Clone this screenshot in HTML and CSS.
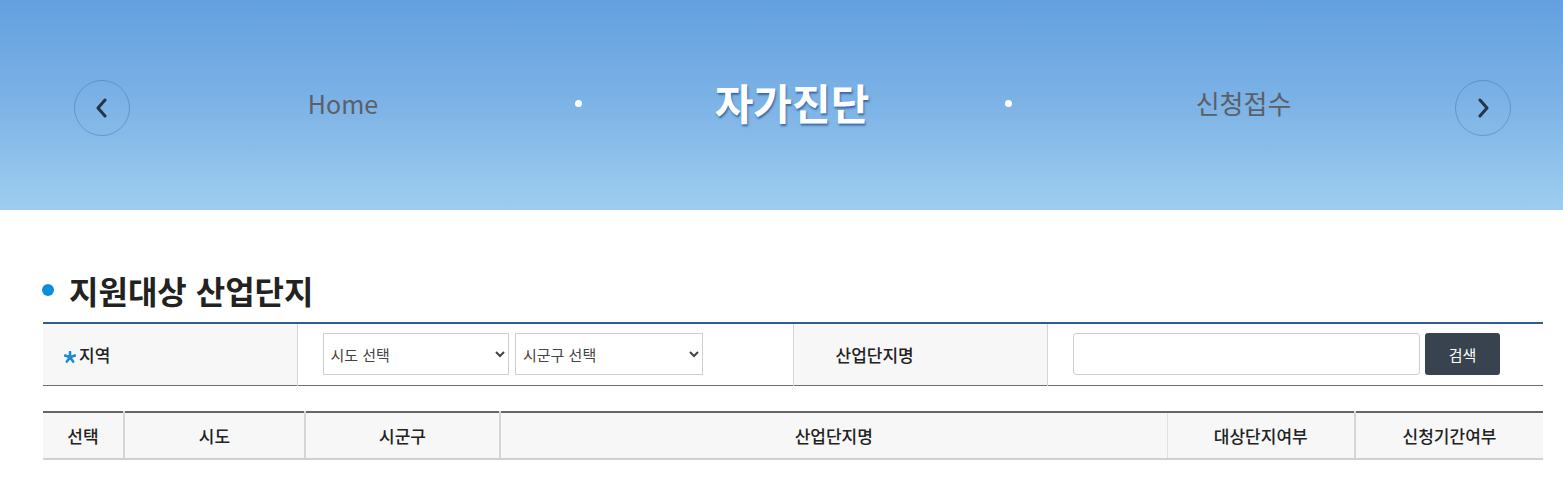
FILE: index.html
```html
<!DOCTYPE html>
<html lang="ko">
<head>
  <meta charset="UTF-8" />
  <title>지원대상 산업단지</title>
  <link rel="stylesheet" href="styles.css">
</head>
<body>
  <div class="visual">
    <div class="visual-nav">
      <a class="arrow-btn" href="#" title="이전">
        <svg width="14" height="20" viewBox="0 0 14 20"><path d="M10 2 L3 10 L10 18" fill="none" stroke="#263447" stroke-width="3" stroke-linecap="round" stroke-linejoin="round"/></svg>
      </a>
      <div class="slot slot-1">Home</div>
      <span class="dot dot-1"></span>
      <div class="slot slot-2 current">자가진단</div>
      <span class="dot dot-2"></span>
      <div class="slot slot-3">신청접수</div>
      <a class="arrow-btn" href="#" title="다음">
        <svg width="14" height="20" viewBox="0 0 14 20"><path d="M4 2 L11 10 L4 18" fill="none" stroke="#263447" stroke-width="3" stroke-linecap="round" stroke-linejoin="round"/></svg>
      </a>
    </div>
  </div>

  <div class="content">
    <h2 class="tit"><span class="bullet"></span>지원대상 산업단지</h2>

    <table class="search-tbl">
      <tr>
        <th class="th-area">
          <svg class="req" width="12" height="12" viewBox="0 0 12 12"><path d="M6 1 L6 6.3 M6 6.3 L11 4.6 M6 6.3 L9.1 10.6 M6 6.3 L2.9 10.6 M6 6.3 L1 4.6" stroke="#1e8ad6" stroke-width="2.6" stroke-linecap="round"/></svg>지역
        </th>
        <td class="td-select">
          <select class="sel sel-sido"><option>시도 선택</option></select>
          <select class="sel sel-sgg"><option>시군구 선택</option></select>
        </td>
        <th class="th-name">산업단지명</th>
        <td class="td-input">
          <input type="text" class="inp" />
          <button type="button" class="btn-search">검색</button>
        </td>
      </tr>
    </table>

    <table class="list-tbl">
      <thead>
        <tr>
          <th class="c1">선택</th>
          <th class="c2">시도</th>
          <th class="c3">시군구</th>
          <th class="c4">산업단지명</th>
          <th class="c5">대상단지여부</th>
          <th class="c6">신청기간여부</th>
        </tr>
      </thead>
    </table>
  </div>
</body>
</html>
```

FILE: styles.css
```css
body {
  margin: 0;
  padding: 0;
  background: #fff;
  color: #222;
  font-family: "Noto Sans CJK KR", "Noto Sans", sans-serif;
}

.visual {
  height: 210px;
  background: linear-gradient(to bottom, #63a0e0 0%, #7db3e6 50%, #9ecdef 100%);
}

.visual-nav {
  display: flex;
  align-items: center;
  height: 210px;
  padding-left: 74px;
  box-sizing: border-box;
}

.arrow-btn {
  display: flex;
  align-items: center;
  justify-content: center;
  width: 56px;
  height: 56px;
  margin-top: 6px;
  border: 1px solid rgba(60, 110, 170, 0.45);
  border-radius: 50%;
  box-sizing: border-box;
}

.slot {
  text-align: center;
  font-size: 25px;
  color: #5b6068;
  line-height: 40px;
  margin-top: -4px;
}

.slot-1 { width: 426px; }
.slot-2 { width: 420px; }
.slot-3 { width: 423px; padding-left: 20px; font-size: 26px; }

.slot.current {
  font-size: 42px;
  font-weight: 700;
  color: #fff;
  text-shadow: 1px 2px 2px rgba(25, 75, 140, 0.7);
  margin-top: -6px;
}

.dot {
  display: block;
  width: 7px;
  height: 7px;
  background: #fff;
  border-radius: 50%;
  margin-top: -4px;
}

.dot-1 { margin-left: 19px; }
.dot-2 { margin-left: 3px; }

.content {
  width: 1500px;
  margin: 0 20px 0 43px;
}

.tit {
  display: flex;
  align-items: center;
  gap: 15px;
  margin: 60px 0 12px;
  font-size: 32px;
  line-height: 40px;
  font-weight: 700;
  color: #222;
}

.bullet {
  width: 12px;
  height: 12px;
  margin-left: -1px;
  border-radius: 50%;
  background: #0b8fdb;
}

table {
  width: 100%;
  border-collapse: collapse;
  table-layout: fixed;
}

.search-tbl {
  border-top: 2px solid #2f5d8e;
  border-bottom: 1px solid #6e6e6e;
}

.search-tbl th,
.search-tbl td {
  height: 62px;
  padding: 0;
  vertical-align: middle;
  box-sizing: border-box;
}

.search-tbl th {
  background: #f7f7f7;
  text-align: left;
  font-size: 17px;
  font-weight: 500;
  color: #222;
  width: 254px;
}

.th-area {
  padding-left: 21px !important;
  border-right: 1px solid #d5d5d5;
}

.th-name {
  padding-left: 42px !important;
  border-left: 1px solid #d5d5d5;
  border-right: 1px solid #d5d5d5;
}

.req {
  vertical-align: -1px;
  margin-right: 3px;
}

.td-select {
  padding-left: 25px !important;
}

.sel {
  height: 42px;
  border: 1px solid #cfcfcf;
  background: #fff;
  font-family: "Noto Sans CJK KR", sans-serif;
  font-size: 15px;
  color: #444;
  padding: 0 3px;
  border-radius: 0;
  vertical-align: middle;
}

.sel-sido { width: 186px; }
.sel-sgg { width: 188px; margin-left: 2px; }

.td-input {
  padding-left: 25px !important;
}

.inp {
  width: 347px;
  height: 42px;
  border: 1px solid #cfcfcf;
  border-radius: 3px;
  box-sizing: border-box;
  vertical-align: middle;
}

.btn-search {
  width: 75px;
  height: 42px;
  margin-left: 1px;
  border: 0;
  border-radius: 3px;
  background: #38434f;
  color: #fff;
  font-family: "Noto Sans CJK KR", sans-serif;
  font-size: 15px;
  vertical-align: middle;
}

.list-tbl {
  margin-top: 25px;
  border-top: 2px solid #666;
}

.list-tbl th {
  height: 47px;
  padding: 0;
  background: #f7f7f7;
  border-bottom: 2px solid #d0d0d0;
  border-left: 2px solid #d5d5d5;
  font-size: 17px;
  font-weight: 500;
  color: #222;
  text-align: center;
  box-sizing: border-box;
}

.list-tbl th.c1 { border-left: 0; width: 81px; }
.list-tbl th.c2 { width: 181px; }
.list-tbl th.c3 { width: 195px; }
.list-tbl th.c5 { width: 188px; border-left: 1px solid #e0e0e0; }
.list-tbl th.c6 { width: 188px; }
```
